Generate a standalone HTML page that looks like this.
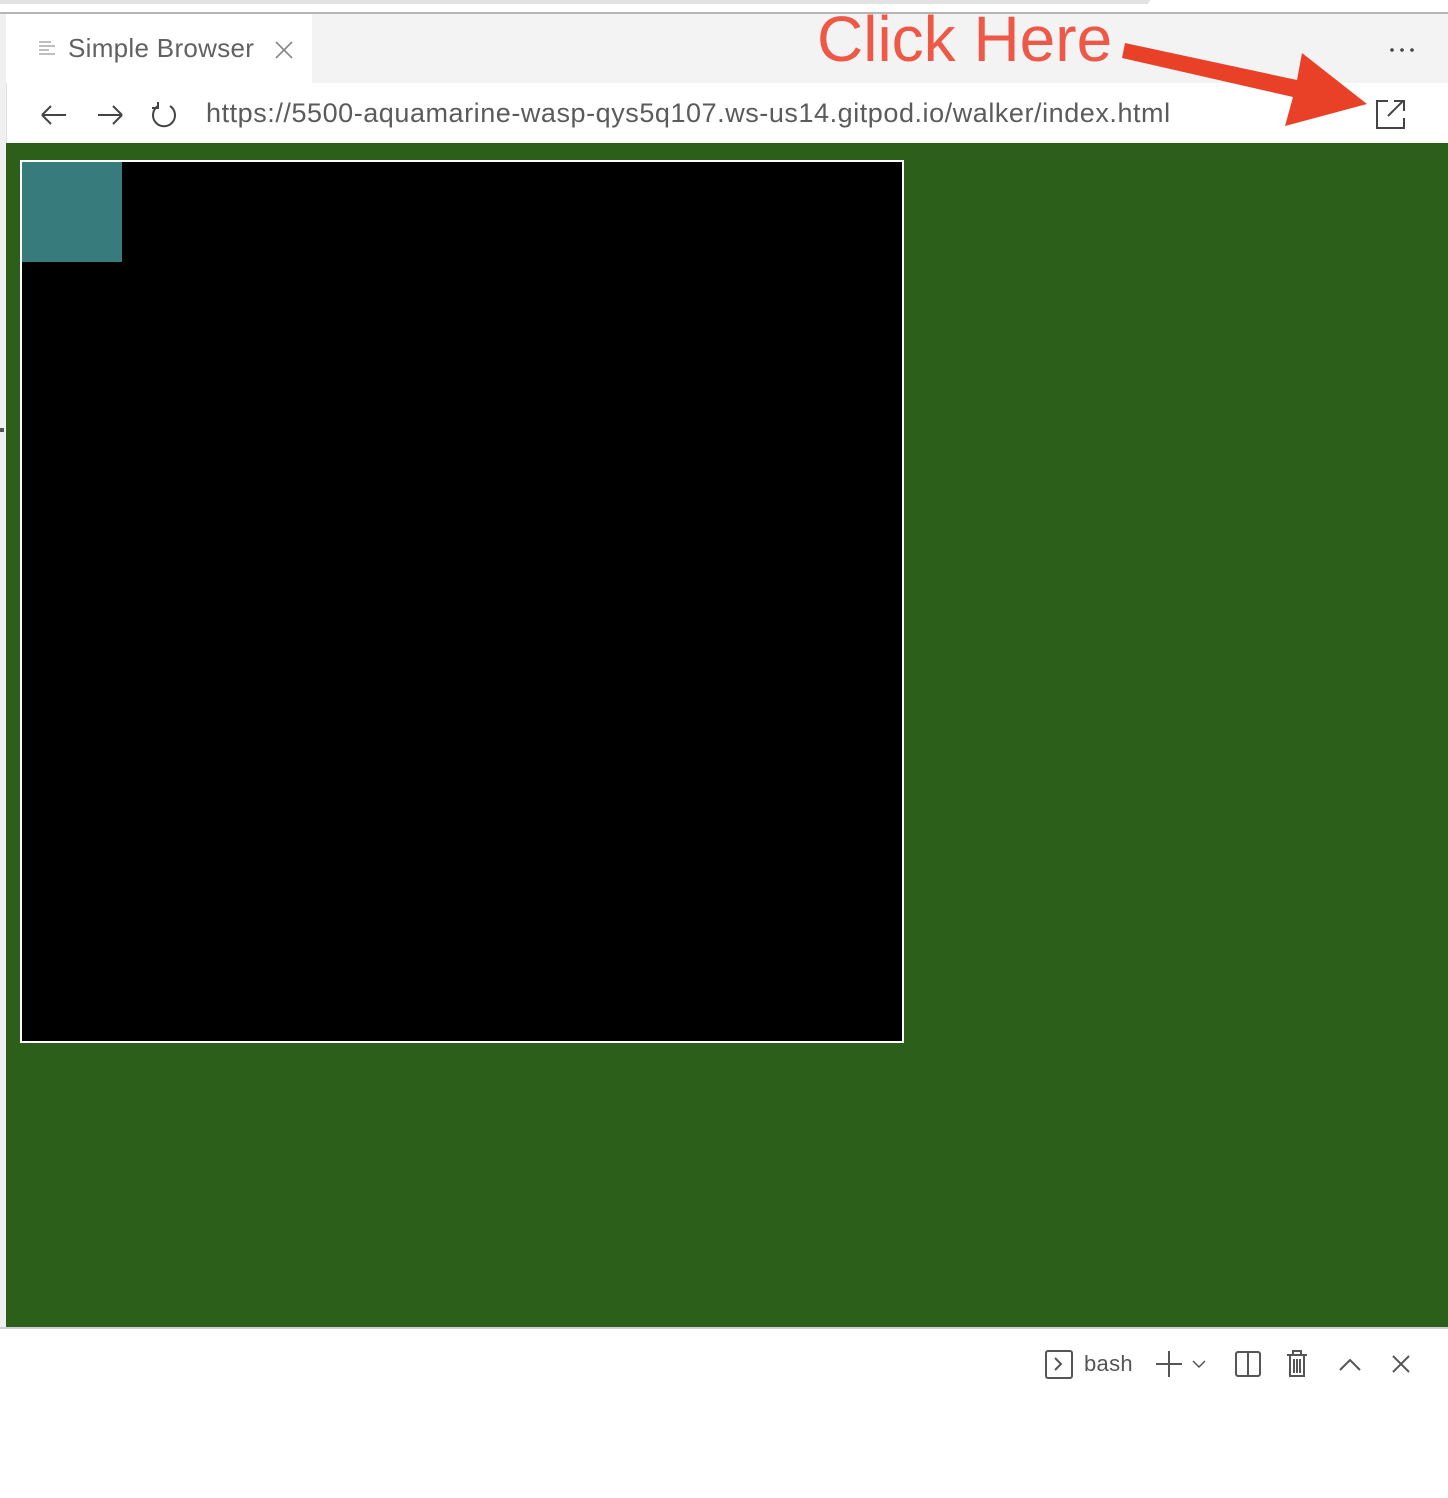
<!DOCTYPE html>
<html><head><style>
body{margin:0;width:1448px;height:1498px;background:#fff;position:relative;overflow:hidden;font-family:"Liberation Sans",sans-serif}
.a{position:absolute}
</style></head><body>
<div class="a" style="left:0;top:0;width:1150px;height:4px;background:#e2e2e2;border-radius:0 0 8px 0"></div>
<div class="a" style="left:0;top:12px;width:1448px;height:2px;background:#b5b5b5"></div>
<div class="a" style="left:0;top:14px;width:6px;height:1314px;background:#f0f0f0;border-right:1px solid #e2e2e2"></div>
<div class="a" style="left:0;top:428px;width:4px;height:4px;background:#555"></div>
<div class="a" style="left:6px;top:14px;width:1442px;height:69px;background:#f3f3f3"></div>
<div class="a" style="left:6px;top:14px;width:306px;height:69px;background:#fff"></div>
<svg class="a" style="left:38px;top:40px" width="18" height="18"><path d="M1 2h12M1 6h16M1 10h10M1 14h16" stroke="#aaa" stroke-width="1.5"/></svg>
<div class="a" style="left:68px;top:33px;font-size:26px;letter-spacing:0.3px;color:#616161">Simple Browser</div>
<svg class="a" style="left:274px;top:40px" width="20" height="20"><path d="M2 2L18 18M18 2L2 18" stroke="#888" stroke-width="1.6"/></svg>
<svg class="a" style="left:1388px;top:46px" width="30" height="8"><circle cx="4" cy="4" r="1.8" fill="#444"/><circle cx="14" cy="4" r="1.8" fill="#444"/><circle cx="24" cy="4" r="1.8" fill="#444"/></svg>
<svg class="a" style="left:38px;top:100px" width="140" height="30">
<path d="M4 15H28M4 15L13 6M4 15L13 24" stroke="#444" stroke-width="2" fill="none"/>
<path d="M60 15H84M84 15L75 6M84 15L75 24" stroke="#444" stroke-width="2" fill="none"/>
<path d="M132 6A11 11 0 1 1 120 6" stroke="#444" stroke-width="2" fill="none"/><path d="M120 2v6h-6" stroke="#444" stroke-width="2" fill="none"/>
</svg>
<div class="a" style="left:206px;top:98px;font-size:27px;letter-spacing:0.55px;color:#5b5b5b">https://5500-aquamarine-wasp-qys5q107.ws-us14.gitpod.io/walker/index.html</div>
<svg class="a" style="left:1374px;top:98px" width="34" height="32"><path d="M14 3H3v27h27V20" stroke="#444" stroke-width="2" fill="none"/><path d="M14 18L29 3M20 3h10v10" stroke="#444" stroke-width="2" fill="none"/></svg>
<div class="a" style="left:6px;top:143px;width:1442px;height:1184px;background:#2b5f1a"></div>
<div class="a" style="left:20px;top:160px;width:880px;height:879px;border:2px solid #fff;background:#000"></div>
<div class="a" style="left:22px;top:162px;width:100px;height:100px;background:#377b7d"></div>
<div class="a" style="left:0;top:1327px;width:1448px;height:2px;background:#d0d0d0"></div>
<div class="a" style="left:817px;top:2px;font-size:64px;color:#ee5847;line-height:74px">Click Here</div>
<svg class="a" style="left:0;top:0" width="1448" height="140"><polygon points="1125,43 1297,80 1302,53 1367,104 1285,126 1293,97 1122,58" fill="#e94128"/></svg>
<svg class="a" style="left:1040px;top:1345px" width="380" height="40">
<rect x="6" y="6" width="26" height="27" rx="2" stroke="#555" stroke-width="2" fill="none"/><path d="M15 13l6 6-6 6" stroke="#555" stroke-width="2" fill="none"/>
<path d="M129 6v26M116 19h26" stroke="#555" stroke-width="2"/><path d="M153 16l6 6 6-6" stroke="#555" stroke-width="1.5" fill="none"/>
<rect x="196" y="7" width="24" height="24" rx="2" stroke="#555" stroke-width="2" fill="none"/><path d="M208 7v24" stroke="#555" stroke-width="2"/>
<path d="M247 10h20M253 10V6h8v4M250 10v21h14V10M254 14v14M257 14v14M260 14v14" stroke="#555" stroke-width="2" fill="none"/>
<path d="M300 25l10-10 10 10" stroke="#555" stroke-width="2" fill="none"/>
<path d="M353 11l16 16M369 11l-16 16" stroke="#555" stroke-width="2"/>
</svg>
<div class="a" style="left:1084px;top:1351px;font-size:22px;letter-spacing:0.3px;color:#555">bash</div>
</body></html>
